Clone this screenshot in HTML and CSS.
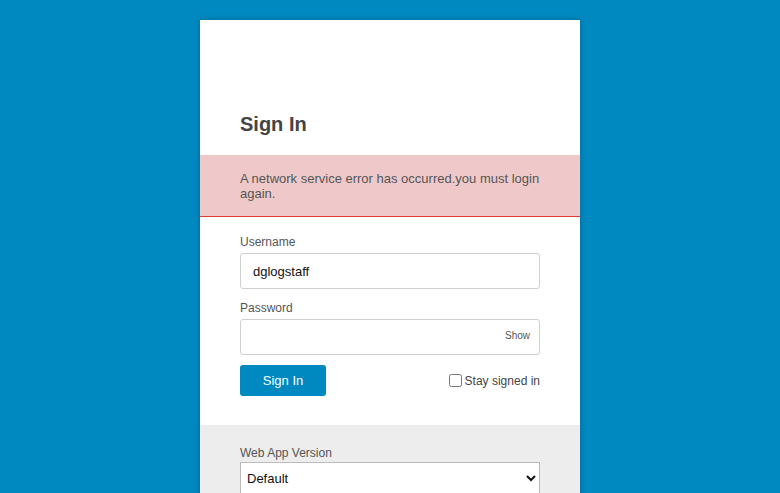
FILE: index.html
```html
<!DOCTYPE html>
<html>
<head>
<meta charset="utf-8">
<link rel="stylesheet" href="styles.css">
</head>
<body>
<div class="card">
  <div class="top">
    <h1 class="title">Sign In</h1>
  </div>
  <div class="error">A network service error has occurred.you must login again.</div>
  <form class="form">
    <label class="label">Username</label>
    <div class="field"><input class="input" type="text" value="dglogstaff"></div>
    <label class="label">Password</label>
    <div class="field pw"><input class="input" type="password"><span class="show">Show</span></div>
    <div class="actions">
      <button type="button" class="btn">Sign In</button>
      <label class="stay"><input type="checkbox" class="cb">Stay signed in</label>
    </div>
  </form>
  <div class="footer">
    <label class="label">Web App Version</label>
    <select class="select"><option>Default</option></select>
  </div>
</div>
</body>
</html>
```
FILE: styles.css
```css
html, body { margin: 0; padding: 0; }
body {
  background: #0089c1;
  font-family: "Liberation Sans", Arial, sans-serif;
  height: 493px;
  overflow: hidden;
}
.card {
  width: 380px;
  margin: 20px auto 0;
  background: #fff;
  box-shadow: 0 0 6px rgba(0,0,0,0.25);
}
.top { padding: 92px 40px 0; height: 135px; box-sizing: border-box; }
.title {
  margin: 0;
  font-size: 20px;
  font-weight: bold;
  color: #444;
  line-height: 24px;
}
.error {
  background: #efc9c9;
  border-bottom: 1px solid #e53935;
  color: #555;
  font-size: 13px;
  line-height: 15px;
  padding: 16px 40px 16px;
  height: 62px;
  box-sizing: border-box;
}
.form { padding: 17px 40px 29px; display: flex; flex-direction: column; }
.label { font-size: 12px; color: #555; line-height: 16px; display: block; }
.field { position: relative; margin: 3px 0 11px; }
.input {
  width: 100%;
  box-sizing: border-box;
  height: 36px;
  border: 1px solid #d0d0d0;
  border-radius: 3px;
  padding: 0 12px;
  font-family: "Liberation Sans", Arial, sans-serif;
  font-size: 13px;
  color: #111;
  outline: none;
}
.show {
  position: absolute;
  right: 10px;
  top: 11px;
  font-size: 10px;
  color: #555;
}
.pw { margin-bottom: 10px; }
.actions { display: flex; justify-content: space-between; align-items: center; }
.btn {
  width: 86px;
  height: 31px;
  background: #0089c1;
  color: #fff;
  border: none;
  border-radius: 3px;
  font-family: "Liberation Sans", Arial, sans-serif;
  font-size: 13px;
}
.stay { font-size: 12px; color: #444; display: flex; align-items: center; }
.cb { margin: 0 3px 0 0; width: 13px; height: 13px; }
.footer {
  background: #ededed;
  padding: 20px 40px 0;
  height: 80px;
}
.footer .label { margin-bottom: 1px; }
.select {
  width: 300px;
  height: 32px;
  border: 1px solid #bbb;
  background: #fff;
  font-family: "Liberation Sans", Arial, sans-serif;
  font-size: 13px;
  color: #111;
  padding: 0 2px;
}
```
